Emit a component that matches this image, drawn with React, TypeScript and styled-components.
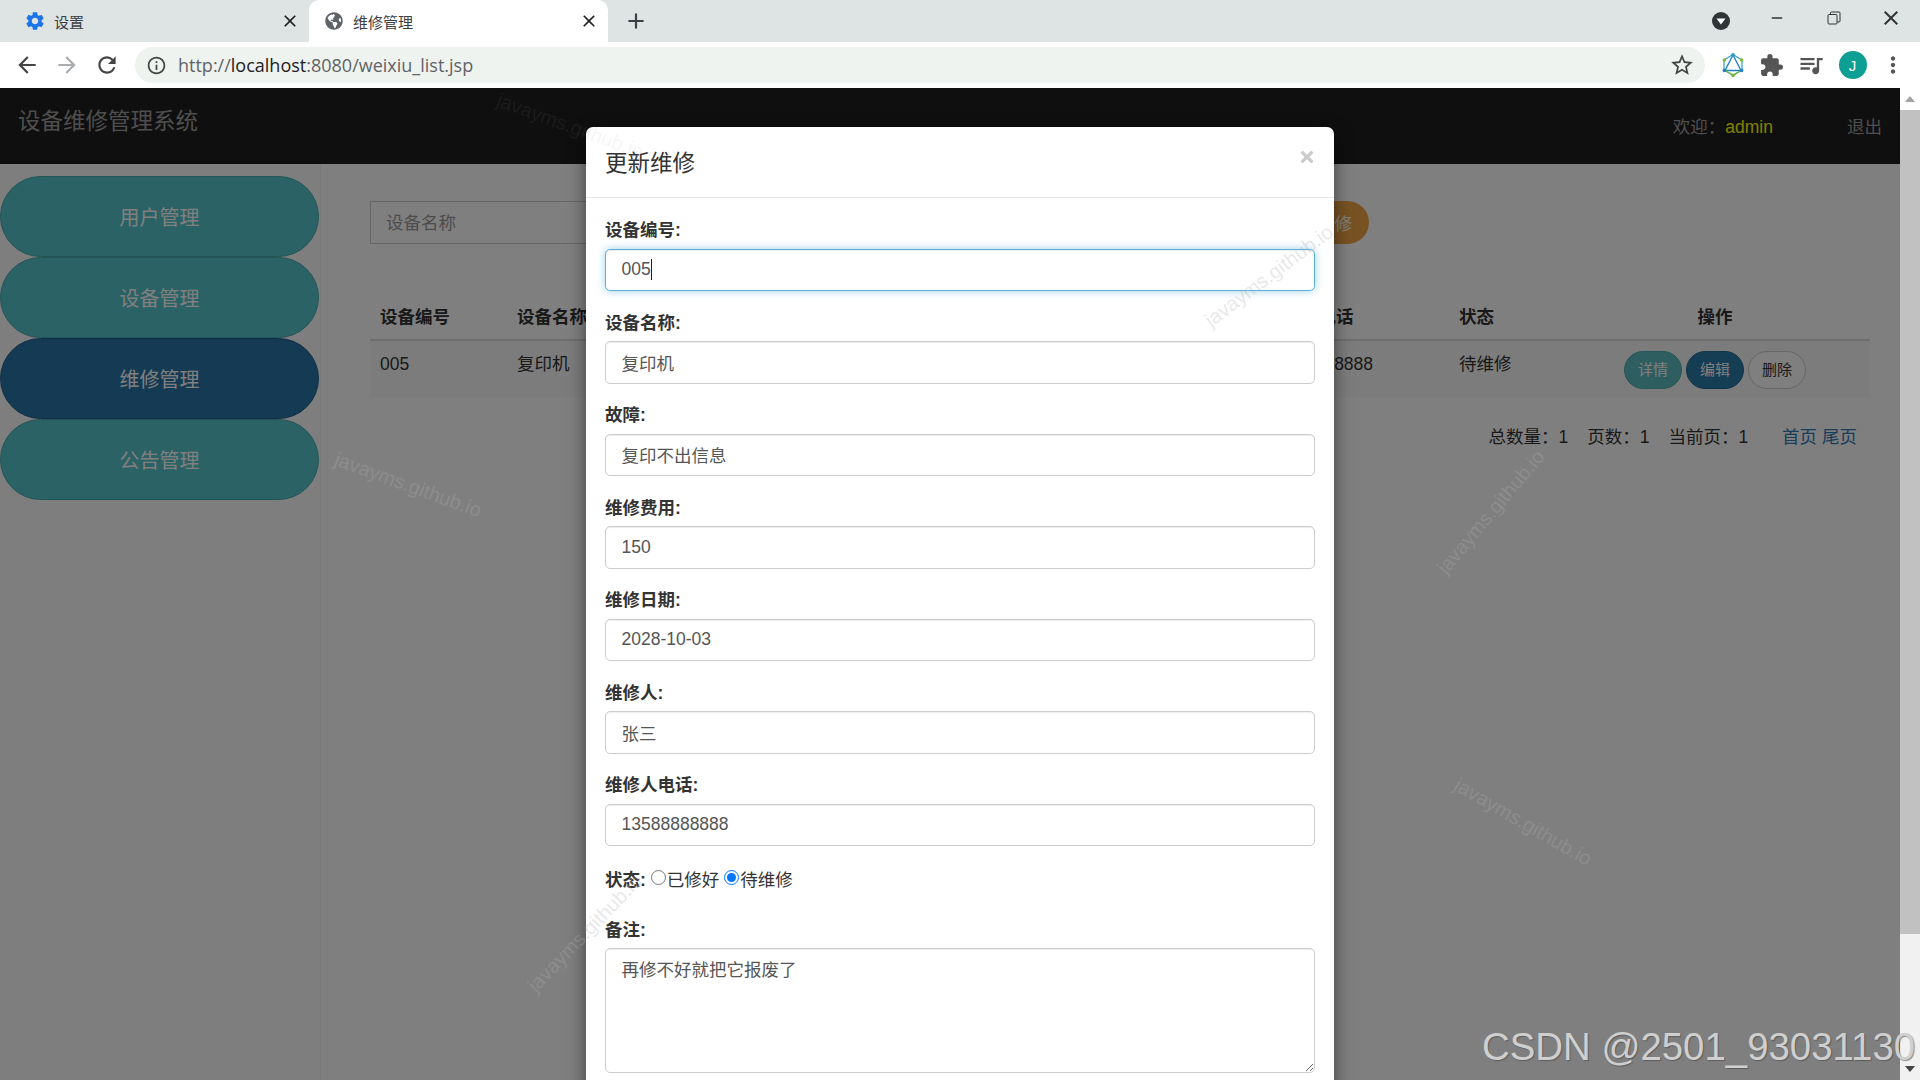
import styled, { createGlobalStyle } from "styled-components";
import {
  MdAdd,
  MdArrowBack,
  MdArrowForward,
  MdClose,
  MdExtension,
  MdInfoOutline,
  MdMoreVert,
  MdQueueMusic,
  MdRefresh,
  MdRemove,
  MdSettings,
  MdStarBorder,
} from "react-icons/md";
import { FaGlobeAmericas, FaTimes } from "react-icons/fa";

const GlobalStyle = createGlobalStyle`
  html, body {
    margin: 0;
    height: 100%;
    overflow: hidden;
    background: #fff;
  }
  body {
    font-family: "Liberation Sans", "Noto Sans CJK SC", sans-serif;
    font-size: 17.5px;
    color: #333;
  }
  * { box-sizing: border-box; }
`;

const Shell = styled.div`
  position: relative;
  width: 1920px;
  height: 1080px;
  display: flex;
  flex-direction: column;
  overflow: hidden;
`;

/* browser chrome */
const TabStrip = styled.div`
  height: 42px;
  background: #dee3e4;
  display: flex;
  align-items: stretch;
  font-family: "Open Sans", "Noto Sans CJK SC", sans-serif;
  color: #3c4043;
`;

const Tab = styled.div<{ $active?: boolean; $width: number }>`
  width: ${(p) => p.$width}px;
  display: flex;
  align-items: center;
  gap: ${(p) => (p.$active ? 10 : 8)}px;
  padding: 0 9px 0 ${(p) => (p.$active ? 16 : 24)}px;
  font-size: 15px;
  background: ${(p) => (p.$active ? "#fff" : "transparent")};
  border-radius: ${(p) => (p.$active ? "10px 10px 0 0" : "0")};
`;

const TabClose = styled(MdClose)`
  margin-left: auto;
  font-size: 20px;
  color: #202124;
`;

const NewTab = styled.div`
  width: 56px;
  display: flex;
  align-items: center;
  justify-content: center;
  font-size: 26px;
  color: #3c4043;
`;

const WindowControls = styled.div`
  margin-left: auto;
  display: flex;
  align-items: center;
  padding: 0 1px 6px 0;
  color: #333;
`;

const WindowBtn = styled.div<{ $width: number; $drop?: number }>`
  width: ${(p) => p.$width}px;
  padding-top: ${(p) => p.$drop ?? 0}px;
  display: flex;
  justify-content: center;
  align-items: center;
`;

const Toolbar = styled.div`
  height: 46px;
  background: #fff;
  display: flex;
  align-items: center;
  padding: 0 14px 0 0;
  color: #5f6368;
`;

const NavBtn = styled.div<{ $dim?: boolean }>`
  width: 40px;
  display: flex;
  justify-content: center;
  font-size: 26px;
  color: ${(p) => (p.$dim ? "#a9adb0" : "#444")};
`;

const NavGroup = styled.div`
  width: 135px;
  padding-left: 7px;
  display: flex;
`;

const UrlBar = styled.div`
  width: 1570px;
  height: 36px;
  border-radius: 18px;
  background: #eff3ef;
  display: flex;
  align-items: center;
  padding: 0 10px 0 11px;
  font-family: "Open Sans", sans-serif;
  font-size: 18px;
  color: #5f6368;
  b {
    font-weight: 400;
    color: #202124;
  }
  span {
    margin-left: 11px;
  }
`;

const UrlStar = styled(MdStarBorder)`
  margin-left: auto;
  font-size: 26px;
  color: #444;
`;

const ToolIcons = styled.div`
  display: flex;
  align-items: center;
  margin-left: 7px;
  flex: 1;
  justify-content: space-between;
  padding: 0 0 0 9px;
  font-size: 25px;
  color: #555;
`;

const Avatar = styled.div`
  width: 28px;
  height: 28px;
  border-radius: 50%;
  background: #0d9e94;
  color: #fff;
  font-size: 15px;
  display: flex;
  align-items: center;
  justify-content: center;
`;

/* page */
const Viewport = styled.div`
  flex: 1;
  min-height: 0;
  display: flex;
`;

const Page = styled.div`
  position: relative;
  flex: 1;
  min-width: 0;
  display: flex;
  flex-direction: column;
  overflow: hidden;
  background: #fff;
`;

const Navbar = styled.div`
  height: 76px;
  flex: none;
  background: #1f1f1f;
  display: flex;
  align-items: flex-start;
  padding: 21px 18px 0 18px;
`;

const Brand = styled.div`
  font-size: 22.5px;
  line-height: 26px;
  color: #9d9d9d;
`;

const NavRight = styled.div`
  margin-left: auto;
  padding-top: 6px;
  line-height: 24px;
  color: #9d9d9d;
  display: flex;
  span {
    color: #ffff00;
  }
`;

const Logout = styled.div`
  margin-left: 74px;
`;

const Body = styled.div`
  flex: 1;
  display: flex;
  min-height: 0;
`;

const Sidebar = styled.div`
  width: 321px;
  flex: none;
  padding-top: 12px;
  background: #fcfcfc;
  border-right: 1px solid #f3f3f3;
`;

const Pill = styled.div<{ $active?: boolean }>`
  width: 319px;
  height: 81px;
  border-radius: 41px;
  border: 1px solid ${(p) => (p.$active ? "#1f5f8c" : "#46a9ad")};
  background: ${(p) => (p.$active ? "#2a74a8" : "#56c4ca")};
  color: #fff;
  font-size: 20px;
  display: flex;
  align-items: center;
  justify-content: center;
`;

const Content = styled.div`
  flex: 1;
  min-width: 0;
  padding: 37px 30px 0 49px;
`;

const SearchRow = styled.div`
  display: flex;
  align-items: center;
  justify-content: space-between;
  padding-right: 501px;
`;

const SearchInput = styled.input`
  width: 500px;
  height: 43px;
  padding: 2px 15px 0;
  font: inherit;
  font-size: 17.5px;
  border: 1.5px solid #ccc;
  background: #fff;
  &::placeholder {
    color: #999;
    opacity: 1;
  }
`;

const AddButton = styled.div`
  height: 43px;
  padding: 0 17px;
  border-radius: 22px;
  background: #f0a544;
  color: #fff;
  display: flex;
  align-items: center;
  font-size: 17.5px;
`;

const Table = styled.table`
  width: 1500px;
  margin-top: 50px;
  border-collapse: collapse;
  table-layout: fixed;
`;

const Col = styled.col<{ $w: number }>`
  width: ${(p) => p.$w}px;
`;

const Th = styled.th<{ $center?: boolean }>`
  height: 46px;
  padding: 0 10px 2px;
  text-align: ${(p) => (p.$center ? "center" : "left")};
  font-size: 17.5px;
  font-weight: 700;
  border-bottom: 2.5px solid #ddd;
  white-space: nowrap;
  overflow: hidden;
`;

const Td = styled.td<{ $center?: boolean }>`
  height: 58px;
  padding: 11px 10px 0;
  vertical-align: top;
  line-height: 24px;
  background: #f9f9f9;
  text-align: ${(p) => (p.$center ? "center" : "left")};
  white-space: nowrap;
`;

const Actions = styled.div`
  display: flex;
  justify-content: center;
  gap: 4px;
  margin-top: -1px;
`;

const RowBtn = styled.div<{ $kind: "info" | "primary" | "plain" }>`
  width: 58px;
  height: 38px;
  border-radius: 19px;
  font-size: 15px;
  display: flex;
  align-items: center;
  justify-content: center;
  color: ${(p) => (p.$kind === "plain" ? "#333" : "#fff")};
  background: ${(p) =>
    p.$kind === "info" ? "#5cbcc0" : p.$kind === "primary" ? "#2a7aa8" : "#fff"};
  border: 1px solid
    ${(p) =>
      p.$kind === "info" ? "#4cacb0" : p.$kind === "primary" ? "#1f6a96" : "#ccc"};
`;

const Pager = styled.div`
  display: flex;
  justify-content: flex-end;
  align-items: center;
  height: 24px;
  margin-top: 25px;
  padding-right: 13px;
  font-size: 17.5px;
  white-space: pre;
  a {
    color: #337ab7;
    text-decoration: none;
    margin-left: 5px;
  }
`;

const PagerStat = styled.span`
  margin-right: 19px;
`;

/* modal */
const Backdrop = styled.div`
  position: absolute;
  inset: 0;
  background: rgba(0, 0, 0, 0.5);
`;

const ModalLayer = styled.div`
  position: absolute;
  top: 39px;
  left: 586px;
  width: 748px;
`;

const Modal = styled.div`
  background: #fff;
  border-radius: 7px 7px 0 0;
  box-shadow: 0 6px 18px rgba(0, 0, 0, 0.5);
`;

const ModalHeader = styled.div`
  height: 71px;
  padding: 0 19px 3px;
  display: flex;
  align-items: center;
  justify-content: space-between;
  border-bottom: 1.5px solid #e5e5e5;
`;

const ModalTitle = styled.div`
  font-size: 22.5px;
  color: #333;
`;

const CloseX = styled(FaTimes)`
  font-size: 18px;
  margin: -8px -1px 0 0;
  color: #000;
  opacity: 0.2;
`;

const ModalBody = styled.div`
  padding: 19px 19px 70px;
`;

const Field = styled.div`
  margin-bottom: 18.5px;
`;

const Label = styled.label`
  display: block;
  height: 25px;
  line-height: 27px;
  margin-bottom: 6.5px;
  font-size: 17.5px;
  font-weight: 700;
`;

const InputWrap = styled.div`
  position: relative;
`;

const Caret = styled.div`
  position: absolute;
  left: 45.5px;
  top: 10px;
  width: 1px;
  height: 21px;
  background: #222;
`;

const TextInput = styled.input`
  display: block;
  width: 100%;
  height: 42.5px;
  padding: 0 15.5px;
  font: inherit;
  font-size: 17.5px;
  color: #555;
  background: #fff;
  border: 1.3px solid #ccc;
  border-radius: 5px;
  box-shadow: inset 0 1px 1px rgba(0, 0, 0, 0.075);
  caret-color: transparent;
  &:focus {
    outline: none;
    border-color: #5cb0d6;
    box-shadow: inset 0 1px 1px rgba(0, 0, 0, 0.075), 0 0 9px rgba(92, 176, 214, 0.6);
  }
`;

const TextArea = styled.textarea`
  display: block;
  width: 100%;
  height: 125px;
  padding: 9px 15.5px;
  font: inherit;
  font-size: 17.5px;
  line-height: 24px;
  color: #555;
  background: #fff;
  border: 1.3px solid #ccc;
  border-radius: 5px;
  box-shadow: inset 0 1px 1px rgba(0, 0, 0, 0.075);
`;

const RadioRow = styled.div`
  height: 33.5px;
  padding-bottom: 5px;
  margin-bottom: 18.5px;
  display: flex;
  align-items: center;
  font-size: 17.5px;
  b {
    margin-right: 5px;
  }
  label {
    display: flex;
    align-items: center;
    margin-right: 5px;
  }
  input {
    width: 15px;
    height: 15px;
    margin: -3px 1px 0 0;
  }
`;

/* scrollbar */
const Scrollbar = styled.div`
  width: 20px;
  flex: none;
  background: #f1f1f1;
  display: flex;
  flex-direction: column;
`;

const ScrollArrow = styled.div<{ $down?: boolean }>`
  height: 22px;
  flex: none;
  display: flex;
  align-items: center;
  justify-content: center;
  background: ${(p) => (p.$down ? "#f1f1f1" : "#fff")};
  margin-top: ${(p) => (p.$down ? "auto" : "0")};
  &::before {
    content: "";
    border-left: 5.5px solid transparent;
    border-right: 5.5px solid transparent;
    ${(p) => (p.$down ? "border-top: 6px solid #444;" : "border-bottom: 6px solid #a3a3a3;")}
  }
`;

const ScrollThumb = styled.div`
  height: 824px;
  flex: none;
  background: #c1c1c1;
`;

/* overlays */
const WaterMark = styled.div<{ $x: number; $y: number; $r: number; $soft?: boolean }>`
  position: absolute;
  left: ${(p) => p.$x}px;
  top: ${(p) => p.$y}px;
  transform: translate(-50%, -50%) rotate(${(p) => p.$r}deg);
  font-size: 20px;
  color: ${(p) => (p.$soft ? "rgba(150, 150, 150, 0.1)" : "rgba(175, 175, 175, 0.3)")};
  white-space: nowrap;
  pointer-events: none;
`;

const Csdn = styled.div`
  position: absolute;
  left: 1482px;
  top: 1024px;
  font-size: 38.4px;
  line-height: 46px;
  color: #cfcfcf;
  text-shadow: 1px 1px 1px rgba(70, 70, 70, 0.6);
  white-space: nowrap;
`;

const marks = [
  { x: 408, y: 485, r: 20 },
  { x: 1491, y: 512, r: -50 },
  { x: 1269, y: 276, r: -37 },
  { x: 1523, y: 822, r: 30 },
  { x: 585, y: 933, r: -46 },
  { x: 570, y: 126, r: 20, soft: true },
];

const fields = [
  ["设备编号", "005"],
  ["设备名称", "复印机"],
  ["故障", "复印不出信息"],
  ["维修费用", "150"],
  ["维修日期", "2028-10-03"],
  ["维修人", "张三"],
  ["维修人电话", "13588888888"],
];

const colWidths = [137, 193, 150, 150, 130, 126, 193, 111, 310];
const columns = ["设备编号", "设备名称", "故障", "维修费用", "维修日期", "维修人", "维修人电话", "状态"];
const rowData = ["005", "复印机", "复印不出信息", "150", "2028-10-03", "张三", "13588888888", "待维修"];

function DropIcon() {
  return (
    <svg width="20" height="20" viewBox="0 0 20 20">
      <circle cx="10" cy="10" r="9" fill="#2f3436" />
      <path d="M5.5 7.5h9L10 13.5z" fill="#fff" />
    </svg>
  );
}

function RestoreIcon() {
  return (
    <svg width="14" height="14" viewBox="0 0 14 14" fill="none" stroke="#333" strokeWidth="1">
      <rect x="1" y="3.5" width="9" height="9.5" rx="1" />
      <path d="M3.5 3.5V2a1 1 0 0 1 1-1H12a1 1 0 0 1 1 1v8a1 1 0 0 1-1 1h-2" />
    </svg>
  );
}

function GraphIcon() {
  return (
    <svg width="24" height="26" viewBox="0 0 24 26" fill="none">
      <path d="M12 2.5 21 8v10l-9 5.5L3 18V8z" stroke="#2c9bd0" strokeWidth="1.2" />
      <path d="M12 3 20 18.5H4z" stroke="#2280c0" strokeWidth="1.4" />
      <path d="M4 18.5 12 23l8-4.5" stroke="#7cba3a" strokeWidth="1.4" />
      <circle cx="12" cy="2.8" r="1.8" fill="#2c9bd0" />
      <circle cx="3.4" cy="8" r="1.8" fill="#7cba3a" />
      <circle cx="20.6" cy="8" r="1.8" fill="#7cba3a" />
      <circle cx="3.4" cy="18.5" r="1.8" fill="#2280c0" />
      <circle cx="20.6" cy="18.5" r="1.8" fill="#2280c0" />
      <circle cx="12" cy="23.4" r="1.8" fill="#7cba3a" />
    </svg>
  );
}

export default function App() {
  return (
    <Shell>
      <GlobalStyle />
      <TabStrip>
        <Tab $width={309}>
          <MdSettings size={22} color="#1a73e8" />
          设置
          <TabClose />
        </Tab>
        <Tab $active $width={299}>
          <FaGlobeAmericas size={18} color="#5f6368" />
          维修管理
          <TabClose />
        </Tab>
        <NewTab>
          <MdAdd />
        </NewTab>
        <WindowControls>
          <WindowBtn $width={56} $drop={6}>
            <DropIcon />
          </WindowBtn>
          <WindowBtn $width={56}>
            <MdRemove size={18} />
          </WindowBtn>
          <WindowBtn $width={58}>
            <RestoreIcon />
          </WindowBtn>
          <WindowBtn $width={56}>
            <MdClose size={24} />
          </WindowBtn>
        </WindowControls>
      </TabStrip>
      <Toolbar>
        <NavGroup>
          <NavBtn>
            <MdArrowBack />
          </NavBtn>
          <NavBtn $dim>
            <MdArrowForward />
          </NavBtn>
          <NavBtn>
            <MdRefresh />
          </NavBtn>
        </NavGroup>
        <UrlBar>
          <MdInfoOutline size={21} color="#444" />
          <span>
            http://<b>localhost</b>:8080/weixiu_list.jsp
          </span>
          <UrlStar />
        </UrlBar>
        <ToolIcons>
          <GraphIcon />
          <MdExtension />
          <MdQueueMusic size={28} />
          <Avatar>J</Avatar>
          <MdMoreVert size={26} />
        </ToolIcons>
      </Toolbar>
      <Viewport>
        <Page>
          <Navbar>
            <Brand>设备维修管理系统</Brand>
            <NavRight>
              欢迎：<span>admin</span>
              <Logout>退出</Logout>
            </NavRight>
          </Navbar>
          <Body>
            <Sidebar>
              <Pill>用户管理</Pill>
              <Pill>设备管理</Pill>
              <Pill $active>维修管理</Pill>
              <Pill>公告管理</Pill>
            </Sidebar>
            <Content>
              <SearchRow>
                <SearchInput placeholder="设备名称" />
                <AddButton>添加维修</AddButton>
              </SearchRow>
              <Table>
                <colgroup>
                  {colWidths.map((w, i) => (
                    <Col key={i} $w={w} />
                  ))}
                </colgroup>
                <thead>
                  <tr>
                    {columns.map((c) => (
                      <Th key={c}>{c}</Th>
                    ))}
                    <Th $center>操作</Th>
                  </tr>
                </thead>
                <tbody>
                  <tr>
                    {rowData.map((c) => (
                      <Td key={c}>{c}</Td>
                    ))}
                    <Td $center>
                      <Actions>
                        <RowBtn $kind="info">详情</RowBtn>
                        <RowBtn $kind="primary">编辑</RowBtn>
                        <RowBtn $kind="plain">删除</RowBtn>
                      </Actions>
                    </Td>
                  </tr>
                </tbody>
              </Table>
              <Pager>
                <PagerStat>总数量：1</PagerStat>
                <PagerStat>页数：1</PagerStat>
                <PagerStat>当前页：1</PagerStat>
                <a href="#first">&nbsp;&nbsp;首页</a>
                <a href="#last">尾页</a>
              </Pager>
            </Content>
          </Body>
          <Backdrop />
          <ModalLayer>
            <Modal>
              <ModalHeader>
                <ModalTitle>更新维修</ModalTitle>
                <CloseX />
              </ModalHeader>
              <ModalBody>
                {fields.map(([label, value], i) => (
                  <Field key={label}>
                    <Label>{label}:</Label>
                    <InputWrap>
                      <TextInput defaultValue={value} autoFocus={i === 0} />
                      {i === 0 && <Caret />}
                    </InputWrap>
                  </Field>
                ))}
                <RadioRow>
                  <b>状态:</b>
                  <label>
                    <input type="radio" name="state" />
                    已修好
                  </label>
                  <label>
                    <input type="radio" name="state" defaultChecked />
                    待维修
                  </label>
                </RadioRow>
                <Field>
                  <Label>备注:</Label>
                  <TextArea defaultValue="再修不好就把它报废了" />
                </Field>
              </ModalBody>
            </Modal>
          </ModalLayer>
        </Page>
        <Scrollbar>
          <ScrollArrow />
          <ScrollThumb />
          <ScrollArrow $down />
        </Scrollbar>
      </Viewport>
      {marks.map((m, i) => (
        <WaterMark key={i} $x={m.x} $y={m.y} $r={m.r} $soft={m.soft}>
          javayms.github.io
        </WaterMark>
      ))}
      <Csdn>CSDN @2501_93031130</Csdn>
    </Shell>
  );
}
